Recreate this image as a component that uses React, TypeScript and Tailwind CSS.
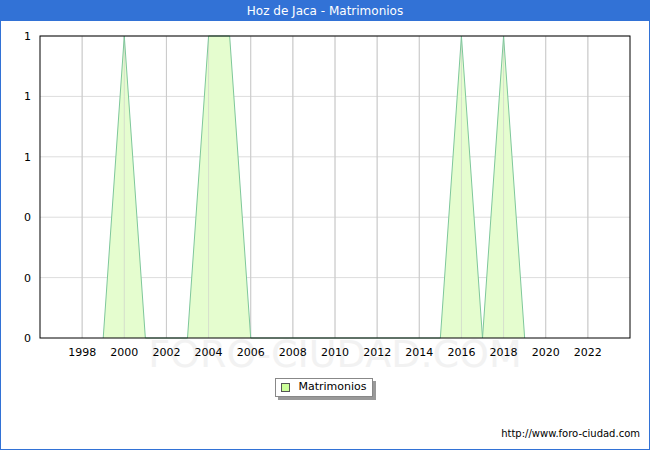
const X0 = 40;
const X1 = 630;
const Y0 = 35;
const Y1 = 337;
const xOf = (y: number) => X0 + ((y - 1996) * (X1 - X0)) / 28;
const yOf = (v: number) => Y1 - v * (Y1 - Y0);

const points: [number, number][] = [
  [1999, 0], [2000, 1], [2001, 0],
  [2003, 0], [2004, 1], [2005, 1], [2006, 0],
  [2015, 0], [2016, 1], [2017, 0], [2018, 1], [2019, 0],
];

export default function App() {
  const years = Array.from({ length: 13 }, (_, i) => 1998 + i * 2);
  const hLines = [0, 1, 2, 3, 4].map((i) => Y0 + (i * (Y1 - Y0)) / 5);
  const yLabels = ["1", "1", "1", "0", "0", "0"];
  const path =
    points.map(([yr, v], i) => `${i ? "L" : "M"}${xOf(yr)},${yOf(v)}`).join(" ");
  const groups = [points.slice(0, 3), points.slice(3, 7), points.slice(7)];

  return (
    <div
      className="w-[650px] h-[450px] border border-[#3272d6] bg-white flex flex-col"
      style={{ fontFamily: '"DejaVu Sans", sans-serif' }}
    >
      <div className="h-[20px] bg-[#3272d6] text-white text-[12px] flex items-center justify-center shrink-0 -mx-px">
        Hoz de Jaca - Matrimonios
      </div>
      <svg width={648} height={356} viewBox="1 20 648 356" className="block shrink-0">
        <text x={335} y={366} textAnchor="middle" fontSize={38} fill="#f2f2f2" fontFamily="DejaVu Sans">
          FORO-CIUDAD.COM
        </text>
        {hLines.map((y, i) => (
          <line key={i} x1={X0} x2={X1} y1={y} y2={y} stroke="#dddddd" />
        ))}
        {years.map((yr) => (
          <line key={yr} x1={xOf(yr)} x2={xOf(yr)} y1={Y0} y2={Y1} stroke="#cccccc" />
        ))}
        {groups.map((g, i) => (
          <polygon
            key={i}
            points={g.map(([yr, v]) => `${xOf(yr)},${yOf(v)}`).join(" ")}
            fill="#e5fdcf"
          />
        ))}
        {years.map((yr) => (
          <line key={"o" + yr} x1={xOf(yr)} x2={xOf(yr)} y1={Y0} y2={Y1} stroke="#cccccc" strokeOpacity={0.6} />
        ))}
        <path d={path} fill="none" stroke="#7ec79b" strokeWidth={1} />
        <rect x={X0} y={Y0} width={X1 - X0} height={Y1 - Y0} fill="none" stroke="#000" />
        {yLabels.map((l, i) => (
          <text key={i} x={31} y={Y0 + (i * (Y1 - Y0)) / 5 + 4} textAnchor="end" fontSize={11} fill="#000" fontFamily="DejaVu Sans">
            {l}
          </text>
        ))}
        {years.map((yr) => (
          <text key={"t" + yr} x={xOf(yr)} y={355} textAnchor="middle" fontSize={11} fill="#000" fontFamily="DejaVu Sans">
            {yr}
          </text>
        ))}
      </svg>
      <div className="flex justify-center mt-[1px] pr-[2px]">
        <div className="flex items-center gap-[8px] border border-[#888] bg-white px-[5px] h-[19px] text-[11px] text-black shadow-[3px_3px_0_#999]">
          <span className="w-[9px] h-[9px] border border-[#555] bg-[#ccff99]" />
          Matrimonios
        </div>
      </div>
      <div className="mt-auto mb-[8px] pr-[9px] text-right text-[10px] text-black">
        http://www.foro-ciudad.com
      </div>
    </div>
  );
}
